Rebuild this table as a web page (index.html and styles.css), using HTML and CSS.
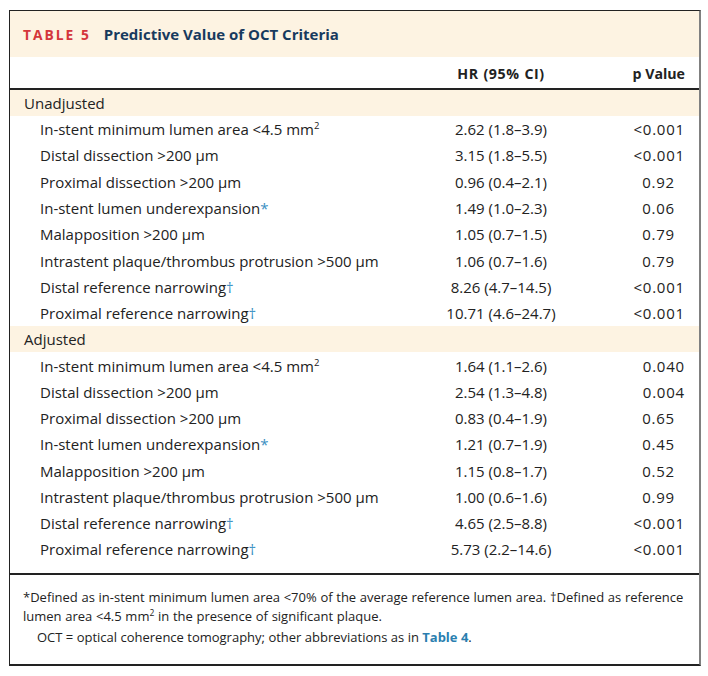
FILE: index.html
```html
<!DOCTYPE html>
<html>
<head>
<meta charset="utf-8">
<link rel="stylesheet" href="styles.css">
</head>
<body>
<div class="card">
  <div class="title"><span class="tag">TABLE 5</span><span class="name">Predictive Value of OCT Criteria</span></div>
  <table class="tbl">
    <colgroup><col class="c1"><col class="c2"><col class="c3"></colgroup>
    <thead>
      <tr><th class="lab"></th><th class="hr">HR (95% CI)</th><th class="p">p Value</th></tr>
    </thead>
    <tbody>
      <tr class="grp"><td colspan="3">Unadjusted</td></tr>
      <tr><td class="lab">In-stent minimum lumen area &lt;4.5 mm<sup>2</sup></td><td class="hr">2.62 (1.8–3.9)</td><td class="p">&lt;0.001</td></tr>
      <tr><td class="lab">Distal dissection &gt;200 μm</td><td class="hr">3.15 (1.8–5.5)</td><td class="p">&lt;0.001</td></tr>
      <tr><td class="lab">Proximal dissection &gt;200 μm</td><td class="hr">0.96 (0.4–2.1)</td><td class="p d2">0.92</td></tr>
      <tr><td class="lab">In-stent lumen underexpansion<span class="fn">*</span></td><td class="hr">1.49 (1.0–2.3)</td><td class="p d2">0.06</td></tr>
      <tr><td class="lab">Malapposition &gt;200 μm</td><td class="hr">1.05 (0.7–1.5)</td><td class="p d2">0.79</td></tr>
      <tr><td class="lab">Intrastent plaque/thrombus protrusion &gt;500 μm</td><td class="hr">1.06 (0.7–1.6)</td><td class="p d2">0.79</td></tr>
      <tr><td class="lab">Distal reference narrowing<span class="fn">†</span></td><td class="hr">8.26 (4.7–14.5)</td><td class="p">&lt;0.001</td></tr>
      <tr><td class="lab">Proximal reference narrowing<span class="fn">†</span></td><td class="hr">10.71 (4.6–24.7)</td><td class="p">&lt;0.001</td></tr>
      <tr class="grp"><td colspan="3">Adjusted</td></tr>
      <tr><td class="lab">In-stent minimum lumen area &lt;4.5 mm<sup>2</sup></td><td class="hr">1.64 (1.1–2.6)</td><td class="p">0.040</td></tr>
      <tr><td class="lab">Distal dissection &gt;200 μm</td><td class="hr">2.54 (1.3–4.8)</td><td class="p">0.004</td></tr>
      <tr><td class="lab">Proximal dissection &gt;200 μm</td><td class="hr">0.83 (0.4–1.9)</td><td class="p d2">0.65</td></tr>
      <tr><td class="lab">In-stent lumen underexpansion<span class="fn">*</span></td><td class="hr">1.21 (0.7–1.9)</td><td class="p d2">0.45</td></tr>
      <tr><td class="lab">Malapposition &gt;200 μm</td><td class="hr">1.15 (0.8–1.7)</td><td class="p d2">0.52</td></tr>
      <tr><td class="lab">Intrastent plaque/thrombus protrusion &gt;500 μm</td><td class="hr">1.00 (0.6–1.6)</td><td class="p d2">0.99</td></tr>
      <tr><td class="lab">Distal reference narrowing<span class="fn">†</span></td><td class="hr">4.65 (2.5–8.8)</td><td class="p">&lt;0.001</td></tr>
      <tr class="last"><td class="lab">Proximal reference narrowing<span class="fn">†</span></td><td class="hr">5.73 (2.2–14.6)</td><td class="p">&lt;0.001</td></tr>
    </tbody>
  </table>
  <div class="foot">
    <p class="note">*Defined as in-stent minimum lumen area &lt;70% of the average reference lumen area. †Defined as reference lumen area &lt;4.5 mm<sup>2</sup> in the presence of significant plaque.</p>
    <p class="abbr">OCT = optical coherence tomography; other abbreviations as in <span class="link">Table 4</span>.</p>
  </div>
</div>
</body>
</html>
```
FILE: styles.css
```css
html, body { margin: 0; padding: 0; background: #fff; }
body { padding: 10px 0 0 9px; font-family: "Open Sans", "Noto Sans", sans-serif; color: #222; }
.card {
  width: 692px;
  border-top: 1px solid #222;
  border-left: 1px solid #222;
  border-right: 2px solid #808080;
  border-bottom: 2px solid #222;
  box-sizing: border-box;
  height: 656px;
}
.title {
  background: #fdf3e2;
  height: 46px;
  display: flex;
  align-items: center;
  padding-left: 13px;
  font-weight: 700;
  font-size: 15px;
}
.tag { color: #d4363c; letter-spacing: 2px; font-size: 13.8px; margin-right: 13px; }
.name { color: #173a5e; }
.tbl { width: 100%; border-collapse: collapse; font-size: 15px; table-layout: fixed; }
.c1 { width: 428px; }
.c2 { width: 126px; }
.tbl th { font-weight: 700; font-size: 14.2px; height: 32px; padding: 0; border-bottom: 2px solid #222; vertical-align: middle; padding-top: 2px; box-sizing: border-box; white-space: nowrap; }
.tbl th.hr { letter-spacing: 0.6px; word-spacing: 0.5px; }
.tbl td { padding: 0; height: 26.3px; vertical-align: middle; white-space: nowrap; }
.tbl .grp td { background: #fdf3e2; height: 26px; padding-left: 14px; }
.tbl td.lab { padding-left: 30px; }
.tbl .hr { text-align: center; }
.tbl .p { text-align: right; padding-right: 14px; }
.tbl td.p { letter-spacing: 0.8px; }
.tbl td.p.d2 { padding-right: 24px; }
.tbl .last td { height: 34px; vertical-align: top; padding-top: 3px; }
.tbl tbody tr:last-child { border-bottom: 2px solid #222; }
sup { font-size: 9.5px; line-height: 0; vertical-align: 6px; }
.fn { color: #3a8fc2; }
.foot { padding: 13px 12px 0 13px; font-size: 13px; line-height: 19px; }
.foot p { margin: 0; }
.foot .note { word-spacing: 0.3px; }
.foot sup { font-size: 8.5px; vertical-align: 5px; }
.foot .abbr { padding-left: 14px; margin-top: 2px; }
.link { color: #2a7fb0; font-weight: 700; }
```
